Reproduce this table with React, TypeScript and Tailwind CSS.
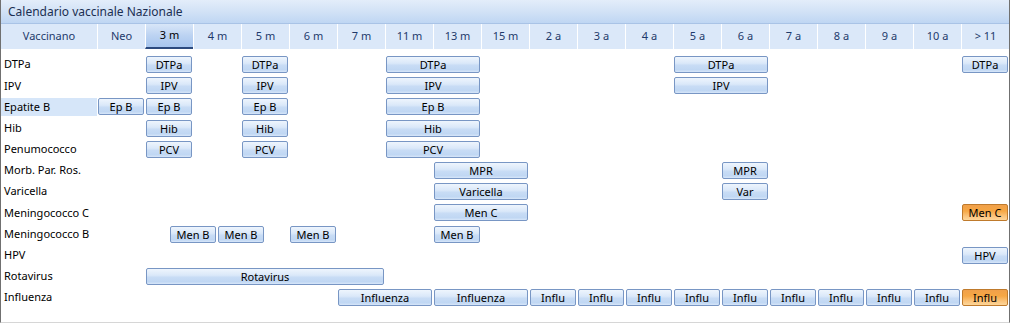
import React from 'react';

type Dose = { label: string; cls: string; orange?: boolean };
type Row = { name: string; selected?: boolean; doses: Dose[] };

const ages = ['Neo', '3 m', '4 m', '5 m', '6 m', '7 m', '11 m', '13 m', '15 m', '2 a', '3 a', '4 a', '5 a', '6 a', '7 a', '8 a', '9 a', '10 a', '> 11'];

// grid: label column + 38 half-columns of 24px (each age = 2 halves)
const rows: Row[] = [
  {
    name: 'DTPa',
    doses: [
      { label: 'DTPa', cls: 'col-start-4 col-span-2' },
      { label: 'DTPa', cls: 'col-start-8 col-span-2' },
      { label: 'DTPa', cls: 'col-start-14 col-span-4' },
      { label: 'DTPa', cls: 'col-start-26 col-span-4' },
      { label: 'DTPa', cls: 'col-start-38 col-span-2' },
    ],
  },
  {
    name: 'IPV',
    doses: [
      { label: 'IPV', cls: 'col-start-4 col-span-2' },
      { label: 'IPV', cls: 'col-start-8 col-span-2' },
      { label: 'IPV', cls: 'col-start-14 col-span-4' },
      { label: 'IPV', cls: 'col-start-26 col-span-4' },
    ],
  },
  {
    name: 'Epatite B',
    selected: true,
    doses: [
      { label: 'Ep B', cls: 'col-start-2 col-span-2' },
      { label: 'Ep B', cls: 'col-start-4 col-span-2' },
      { label: 'Ep B', cls: 'col-start-8 col-span-2' },
      { label: 'Ep B', cls: 'col-start-14 col-span-4' },
    ],
  },
  {
    name: 'Hib',
    doses: [
      { label: 'Hib', cls: 'col-start-4 col-span-2' },
      { label: 'Hib', cls: 'col-start-8 col-span-2' },
      { label: 'Hib', cls: 'col-start-14 col-span-4' },
    ],
  },
  {
    name: 'Penumococco',
    doses: [
      { label: 'PCV', cls: 'col-start-4 col-span-2' },
      { label: 'PCV', cls: 'col-start-8 col-span-2' },
      { label: 'PCV', cls: 'col-start-14 col-span-4' },
    ],
  },
  {
    name: 'Morb. Par. Ros.',
    doses: [
      { label: 'MPR', cls: 'col-start-16 col-span-4' },
      { label: 'MPR', cls: 'col-start-28 col-span-2' },
    ],
  },
  {
    name: 'Varicella',
    doses: [
      { label: 'Varicella', cls: 'col-start-16 col-span-4' },
      { label: 'Var', cls: 'col-start-28 col-span-2' },
    ],
  },
  {
    name: 'Meningococco C',
    doses: [
      { label: 'Men C', cls: 'col-start-16 col-span-4' },
      { label: 'Men C', cls: 'col-start-38 col-span-2', orange: true },
    ],
  },
  {
    name: 'Meningococco B',
    doses: [
      { label: 'Men B', cls: 'col-start-5 col-span-2' },
      { label: 'Men B', cls: 'col-start-7 col-span-2' },
      { label: 'Men B', cls: 'col-start-10 col-span-2' },
      { label: 'Men B', cls: 'col-start-16 col-span-2' },
    ],
  },
  {
    name: 'HPV',
    doses: [{ label: 'HPV', cls: 'col-start-38 col-span-2' }],
  },
  {
    name: 'Rotavirus',
    doses: [{ label: 'Rotavirus', cls: 'col-start-4 col-span-10' }],
  },
  {
    name: 'Influenza',
    doses: [
      { label: 'Influenza', cls: 'col-start-12 col-span-4' },
      { label: 'Influenza', cls: 'col-start-16 col-span-4' },
      { label: 'Influ', cls: 'col-start-20 col-span-2' },
      { label: 'Influ', cls: 'col-start-22 col-span-2' },
      { label: 'Influ', cls: 'col-start-24 col-span-2' },
      { label: 'Influ', cls: 'col-start-26 col-span-2' },
      { label: 'Influ', cls: 'col-start-28 col-span-2' },
      { label: 'Influ', cls: 'col-start-30 col-span-2' },
      { label: 'Influ', cls: 'col-start-32 col-span-2' },
      { label: 'Influ', cls: 'col-start-34 col-span-2' },
      { label: 'Influ', cls: 'col-start-36 col-span-2' },
      { label: 'Influ', cls: 'col-start-38 col-span-2', orange: true },
    ],
  },
];

const blueBtn =
  'border-[#7896c4] bg-[linear-gradient(to_bottom,#eef5fd_0%,#dae8f9_42%,#c8dcf5_55%,#c0d7f3_85%,#d7e6f9_100%)]';
const orangeBtn =
  'border-[#bf7a2c] bg-[linear-gradient(to_bottom,#f0a04a_0%,#f6a744_40%,#fbc47c_75%,#fdd69a_100%)]';

const DoseButton: React.FC<{ dose: Dose }> = ({ dose }) => (
  <div
    className={`${dose.cls} mx-px h-[17px] rounded-[2px] border flex items-center justify-center text-[11px] leading-none text-black ${
      dose.orange ? orangeBtn : blueBtn
    }`}
  >
    {dose.label}
  </div>
);

export default function App() {
  return (
    <div className="w-[1010px] h-[323px] bg-white border-x border-[#707070] border-b border-b-[#d6d6d6] font-['Noto_Sans','Open_Sans',sans-serif] overflow-hidden">
      {/* Title */}
      <div className="h-6 flex items-center pl-[7px] text-[12px] text-[#1b2f52] bg-[linear-gradient(to_bottom,#e3edfa_0%,#d2e2f6_50%,#bfd6f3_100%)] border-b border-[#a9c3e6]">
        Calendario vaccinale Nazionale
      </div>

      {/* Age header */}
      <div className="grid grid-cols-[96px_repeat(19,48px)] h-[25px] bg-[#dbe8f9] text-[11px] text-[#1e3a6b]">
        <div className="flex items-center justify-center">Vaccinano</div>
        {ages.map((a) =>
          a === '3 m' ? (
            <div
              key={a}
              className="flex items-center justify-center border-l border-white border-b-2 border-b-[#2c4a7e] bg-[linear-gradient(to_bottom,#d8e6f8_0%,#bcd3f2_50%,#a7c5ee_100%)] text-black"
            >
              {a}
            </div>
          ) : (
            <div key={a} className="flex items-center justify-center border-l border-white">
              {a}
            </div>
          )
        )}
      </div>

      {/* Vaccine rows */}
      <div className="pt-[5px]">
        {rows.map((r) => (
          <div key={r.name} className="grid grid-cols-[96px_repeat(38,24px)] h-[21.2px] items-center">
            <div
              className={`col-start-1 h-[18px] flex items-center pl-[3px] text-[11px] text-black ${
                r.selected ? 'bg-[#d6e6f9]' : ''
              }`}
            >
              {r.name}
            </div>
            {r.doses.map((d, i) => (
              <DoseButton key={i} dose={d} />
            ))}
          </div>
        ))}
      </div>
    </div>
  );
}
